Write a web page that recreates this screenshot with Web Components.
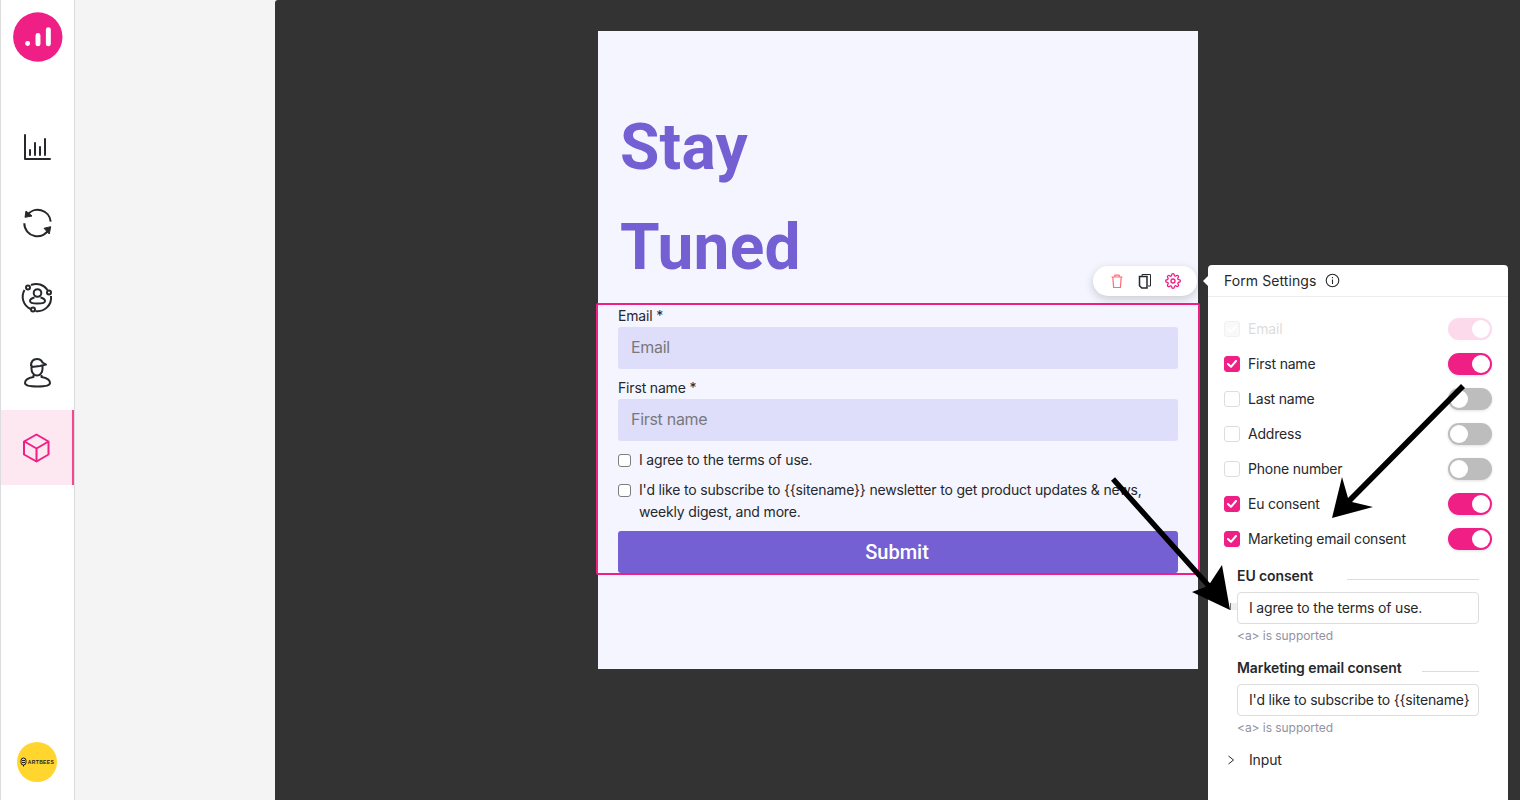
<!DOCTYPE html>
<html lang="en">
<head>
<meta charset="utf-8">
<title>Form Settings</title>
<style>
html,body{margin:0;padding:0;height:800px;overflow:hidden;background:#f4f4f4;font-family:Inter,"Liberation Sans",sans-serif;color:#26282b}
#app{display:flex;height:800px;position:relative}
</style>
</head>
<body>
<div id="app">
  <app-sidebar>
    <nav-item><svg viewBox="0 0 75 75" width="75" height="75" fill="none" stroke="#26282b" stroke-width="2"><path d="M25 25v24h25" stroke-linecap="round" stroke-linejoin="round"/><path d="M30 40v5M35 33v12M40 37v8M45 29v16" stroke-linecap="round"/></svg></nav-item>
    <nav-item><svg viewBox="0 0 75 75" width="75" height="75" fill="none" stroke="#26282b" stroke-width="2"><path d="M27 30.500A13 13 0 0 1 50.700 36.700"/><path d="M49.300 43.300A13 13 0 0 1 24.300 38.300"/><path d="M26 26l-1 6.300 7-1.300z" fill="#26282b" stroke-width="1" stroke-linejoin="round"/><path d="M50.700 41.700l-6.700 1.600 5.300 5.700z" fill="#26282b" stroke-width="1" stroke-linejoin="round"/></svg></nav-item>
    <nav-item><svg viewBox="0 0 75 75" width="75" height="75" fill="none" stroke="#26282b" stroke-width="2"><path d="M31 25a13.500 13.500 0 0 1 16.500 5M51 36a13.500 13.500 0 0 1-15.500 15M30.500 49a13.500 13.500 0 0 1-6-19"/><circle cx="28" cy="27.500" r="2"/><circle cx="49" cy="32.500" r="2"/><circle cx="33" cy="49.500" r="2"/><circle cx="37.500" cy="33" r="3.800"/><path d="M34.500 37.500c-2.500.7-4.500 2-4.500 3.500 0 1.500 3 2.500 7.500 2.500s7.500-1 7.500-2.500c0-1.500-2-2.800-4.500-3.500"/></svg></nav-item>
    <nav-item><svg viewBox="0 0 75 75" width="75" height="75" fill="none" stroke="#26282b" stroke-width="2" stroke-linejoin="round"><path d="M31 31c0-4.500 2.500-7 6-7 2.500 0 4.500 1.200 5.500 3.500l3.500 2-6 1.500-8.500 1"/><path d="M31.500 30v4c0 3.500 2.500 6.500 5.500 6.500s5.500-3 5.500-6.500v-3"/><path d="M33.500 40v2c-4.500.8-8.500 2.800-8.500 6 0 2.500 4.500 3.500 12.500 3.500S50 50.500 50 48c0-3.200-4-5.200-8.500-6v-2"/></svg></nav-item>
    <nav-item active><svg viewBox="0 0 75 75" width="75" height="75" fill="none" stroke="#f01f86" stroke-width="2" stroke-linejoin="round"><path d="M36.500 24.500l12 7v13l-12 7-12.500-7v-13z"/><path d="M24.500 31.500l12 7 12-7M36.500 38.500v13"/></svg></nav-item>
  </app-sidebar>
  <div style="width:200px;flex:none;background:#f4f4f4"></div>
  <stage-canvas>
    <signup-form></signup-form>
  </stage-canvas>
  <form-toolbar></form-toolbar>
  <settings-panel></settings-panel>
  <annotation-arrows></annotation-arrows>
</div>

<template id="t-sidebar">
<style>
:host{display:flex;flex-direction:column;width:75px;flex:none;box-sizing:border-box;height:800px;background:#fff;border-left:1px solid #dcdcdc;border-right:1px solid #dcdcdc}
.logo{height:74px;display:flex;flex:none;margin-left:-1px}
.nav{padding-top:36px;display:flex;flex-direction:column;width:73px}
.foot{margin-top:auto;height:58px;margin-left:16px;flex:none}
.badge{width:40px;height:40px;border-radius:50%;background:#ffd52e;display:flex;align-items:center;justify-content:center;gap:1px}
.badge span{font:900 5px "Liberation Sans",sans-serif;letter-spacing:.35px;color:#1b1b1b;line-height:6px}
</style>
<div class="logo"><svg viewBox="0 0 75 74" width="75" height="74"><circle cx="38.300" cy="37" r="25" fill="#f01f86"/><g stroke="#fff" stroke-width="5" stroke-linecap="round"><path d="M28 43.500v.1M38.500 35.500v8.500M49 29.500V44"/></g></svg></div>
<div class="nav"><slot></slot></div>
<div class="foot"><div class="badge"><svg width="7" height="10" viewBox="0 0 7 10" fill="none" stroke="#1b1b1b" stroke-width="1"><rect x="1" y="1" width="5" height="7" rx="2.500"/><path d="M2 3.500h3M2 5.500h3M3.500 8v1.500"/></svg><span>ARTBEES</span></div></div>
</template>

<template id="t-nav">
<style>
:host{display:block;height:75px;position:relative;flex:none;overflow:hidden}
:host([active]){background:#fde8f1}
:host([active])::after{content:"";position:absolute;right:0;top:0;bottom:0;width:2px;background:#f5478a}
::slotted(svg){display:block;margin-left:-1px}
</style>
<slot></slot>
</template>

<template id="t-stage">
<style>
:host{display:block;flex:1;background:#333;border-top-left-radius:3px;padding-top:31px;box-sizing:border-box;height:800px}
.page{width:600px;height:638px;margin:0 auto 0 323px;background:#f5f5ff;box-sizing:border-box;padding-top:67px}
h1{margin:0 0 6px;padding-left:22px;font:700 64px/99.500px Roboto,sans-serif;letter-spacing:.2px;color:#7460d3}
</style>
<div class="page"><h1>Stay<br>Tuned</h1><slot></slot></div>
</template>

<template id="t-form">
<style>
:host{display:block;margin:0 -2px;border:2px solid #f01f86;border-radius:2px;box-sizing:border-box;width:604px;height:272px;padding:0 20px;font:14px/22px Inter,"Liberation Sans",sans-serif;letter-spacing:-.17px;color:#26282b}
.lab{display:block;height:22px}
.inp{height:42px;border-radius:3px;background:#dedefa;color:#78787c;font-size:16px;line-height:40px;letter-spacing:-.3px;padding-left:13px;margin-bottom:8px}
.chk{display:flex;gap:8px;margin-bottom:8px;width:560px}
.box{width:13px;height:13px;box-sizing:border-box;border:1px solid #7d7d7d;border-radius:3px;background:#fff;flex:none;margin-top:5px}
.txt{width:530px}
button{display:block;width:560px;height:42px;border:0;border-radius:3px;background:#7460d3;color:#fff;font:500 20px/42px Roboto,sans-serif;padding:0 2px 0 0}
</style>
<span class="lab">Email *</span>
<div class="inp">Email</div>
<span class="lab">First name *</span>
<div class="inp">First name</div>
<div class="chk"><span class="box"></span><span class="txt">I agree to the terms of use.</span></div>
<div class="chk"><span class="box"></span><span class="txt">I'd like to subscribe to {{sitename}} newsletter to get product updates &amp; news, weekly digest, and more.</span></div>
<button type="button">Submit</button>
</template>

<template id="t-toolbar">
<style>
:host{position:absolute;left:1093px;top:266px;width:104px;height:30px;background:#fff;border-radius:15px;box-shadow:0 3px 10px rgba(0,0,0,.18);box-sizing:border-box;display:flex;align-items:center;padding-left:16px;gap:12px}
svg{display:block;flex:none}
</style>
<svg width="16" height="16" viewBox="0 0 16 16" fill="none" stroke="#ff6b78" stroke-width="1.200" stroke-linejoin="round"><path d="M2.500 4h11M5.800 4V2.200h4.400V4M3.800 4l.8 10.500h6.800L12.200 4"/></svg>
<svg width="16" height="16" viewBox="0 0 16 16" fill="none" stroke="#26282b" stroke-width="1.200"><path d="M5 3V1.500h8.500v11.500H11" stroke-width="1"/><path d="M2.500 3.500h7.500V15H4.800L2.500 12.800z" fill="#fff" stroke-width="1.500"/></svg>
<svg width="16" height="16" viewBox="0 0 24 24" fill="none" stroke="#f01f86" stroke-width="2" stroke-linejoin="round"><circle cx="12" cy="12" r="3"/><path d="M19.400 15a1.650 1.650 0 0 0 .33 1.820l.06.06a2 2 0 1 1-2.830 2.830l-.06-.06a1.650 1.650 0 0 0-2.820 1.170V21a2 2 0 0 1-4 0v-.09A1.650 1.650 0 0 0 9 19.400a1.650 1.650 0 0 0-1.820.33l-.06.06a2 2 0 1 1-2.830-2.830l.06-.06a1.650 1.650 0 0 0-1.170-2.820H3a2 2 0 0 1 0-4h.09A1.650 1.650 0 0 0 4.600 9a1.650 1.650 0 0 0-.33-1.820l-.06-.06a2 2 0 1 1 2.830-2.830l.06.06a1.650 1.650 0 0 0 2.820-1.170V3a2 2 0 0 1 4 0v.09a1.650 1.650 0 0 0 2.820 1.170l.06-.06a2 2 0 1 1 2.830 2.830l-.06.06a1.650 1.650 0 0 0 1.170 2.820H21a2 2 0 0 1 0 4h-.09a1.650 1.650 0 0 0-1.510 1z"/></svg>
</template>

<template id="t-panel">
<style>
:host{position:absolute;left:1208px;top:265px;width:300px;height:535px;background:#fff;border-radius:4px 4px 0 0;font:14px/20px Inter,"Liberation Sans",sans-serif;color:#26282b}
:host::before{content:"";position:absolute;left:-5px;top:11px;border:5px solid transparent;border-left:0;border-right-color:#fff}
header{height:32px;box-sizing:border-box;border-bottom:1px solid #eee;display:flex;align-items:center;padding-left:16px;gap:9px;letter-spacing:.08px}
header svg{display:block}
.rows{padding-top:14px;padding-bottom:1px;letter-spacing:-.2px}
.more{display:flex;align-items:center;height:20px;padding-left:19px;gap:14px;margin-top:12px;letter-spacing:-.15px}
</style>
<header><span>Form Settings</span><svg width="15" height="15" viewBox="0 0 15 15" fill="none" stroke="#26282b" stroke-width="1.100"><circle cx="7.500" cy="7.500" r="6.300"/><path d="M7.500 6.500v4.500M7.500 4v1.200"/></svg></header>
<div class="rows">
  <field-toggle disabled checked>Email</field-toggle>
  <field-toggle checked>First name</field-toggle>
  <field-toggle>Last name</field-toggle>
  <field-toggle>Address</field-toggle>
  <field-toggle>Phone number</field-toggle>
  <field-toggle checked>Eu consent</field-toggle>
  <field-toggle checked>Marketing email consent</field-toggle>
</div>
<consent-field label="EU consent" value="I agree to the terms of use." line="132"></consent-field>
<consent-field label="Marketing email consent" value="I'd like to subscribe to {{sitename}" line="57"></consent-field>
<div class="more"><svg width="8" height="10" viewBox="0 0 8 10" fill="none" stroke="#26282b" stroke-width="1"><path d="M1.500 1l5 4-5 4"/></svg><span>Input</span></div>
</template>

<template id="t-toggle">
<style>
:host{display:flex;align-items:center;height:35px;padding:0 16px;box-sizing:border-box}
:host([disabled]) .c{opacity:.16}
.c{display:flex;align-items:center;width:100%}
.box{width:16px;height:16px;box-sizing:border-box;border:1px solid #ddd;border-radius:3px;background:#fff;margin-right:8px;flex:none;display:flex;align-items:center;justify-content:center}
.box svg{display:none}
:host([checked]) .box{background:#f01f86;border-color:#f01f86}
:host([checked]) .box svg{display:block}
:host([disabled]) .box{background:#ddd;border-color:#aaa}
.sw{margin-left:auto;width:44px;height:22px;border-radius:11px;background:#bdbdbd;position:relative;flex:none;box-shadow:0 1px 3px rgba(0,0,0,.12)}
.sw::after{content:"";position:absolute;left:2px;top:2px;width:18px;height:18px;border-radius:50%;background:#fff}
:host([checked]) .sw{background:#f01f86}
:host([checked]) .sw::after{left:24px}
</style>
<div class="c"><span class="box"><svg width="10" height="8" viewBox="0 0 10 8" fill="none" stroke="#fff" stroke-width="2" stroke-linecap="round" stroke-linejoin="round"><path d="M1 4l3 2.800L9 1"/></svg></span><span><slot></slot></span><span class="sw"></span></div>
</template>

<template id="t-consent">
<style>
:host{display:block;padding:0 29px;margin-top:9px;font:14px/20px Inter,"Liberation Sans",sans-serif;color:#26282b}
.h{display:flex;justify-content:space-between;height:20px}
b{font-weight:600;letter-spacing:-.09px}
i{display:block;height:1px;background:#ddd;margin-top:13px}
.v{height:32px;box-sizing:border-box;border:1px solid #ddd;border-radius:4px;padding-left:11px;line-height:30px;white-space:nowrap;overflow:hidden;margin-top:6px;letter-spacing:-.18px}
small{display:block;font-size:12px;line-height:16px;color:#8f93a0;margin-top:4px;margin-bottom:14px;letter-spacing:-.05px}
</style>
<div class="h"><b></b><i></i></div>
<div class="v"></div>
<small>&lt;a&gt; is supported</small>
</template>

<template id="t-arrows">
<style>
:host{position:absolute;left:0;top:0;width:1520px;height:800px;pointer-events:none;display:block}
svg{display:block}
</style>
<svg width="1520" height="800" viewBox="0 0 1520 800">
  <rect x="1230" y="603" width="7" height="7" fill="#eee"/>
  <path d="M1230.500 603v7" stroke="#777" stroke-width="1"/>
  <g fill="#000" stroke="none">
    <path d="M1465 388L1352 502 1373 507 1332 518 1342 477 1348 498 1461 384z"/>
    <path d="M1115 477.200L1210 583.200 1222 565 1230 610 1192 592 1206 586.800 1111 480.800z"/>
  </g>
</svg>
</template>

<script>
function mount(el,id){const r=el.attachShadow({mode:"open"});r.appendChild(document.getElementById(id).content.cloneNode(true));return r}
const simple={ "app-sidebar":"t-sidebar","nav-item":"t-nav","stage-canvas":"t-stage","signup-form":"t-form","form-toolbar":"t-toolbar","settings-panel":"t-panel","field-toggle":"t-toggle","annotation-arrows":"t-arrows"};
for(const [n,id] of Object.entries(simple)){customElements.define(n,class extends HTMLElement{constructor(){super();mount(this,id)}})}
customElements.define("consent-field",class extends HTMLElement{
  constructor(){super();mount(this,"t-consent")}
  connectedCallback(){const r=this.shadowRoot;
    r.querySelector("b").textContent=this.getAttribute("label");
    r.querySelector(".v").textContent=this.getAttribute("value");
    r.querySelector("i").style.width=this.getAttribute("line")+"px";}
});
</script>
</body>
</html>
